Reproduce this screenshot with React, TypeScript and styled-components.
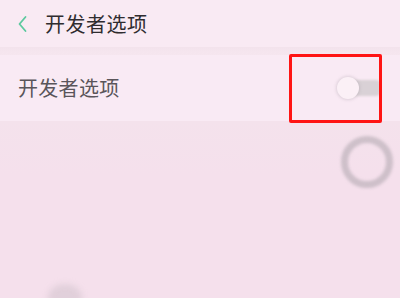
import React from "react";
import styled, { createGlobalStyle } from "styled-components";

const Global = createGlobalStyle`
  html, body { margin: 0; padding: 0; }
  body {
    width: 400px;
    height: 298px;
    overflow: hidden;
    background: #f5e1ed;
    font-family: "Noto Sans CJK SC", "Noto Sans", sans-serif;
  }
`;

const Screen = styled.div`
  position: relative;
  width: 400px;
  height: 298px;
  display: flex;
  flex-direction: column;
  background: #f5e1ec;
  overflow: hidden;
`;

const Header = styled.header`
  height: 47px;
  display: flex;
  align-items: center;
  padding-left: 17px;
  gap: 17px;
  background: #f9eaf3;
`;

const BackIcon = styled.svg`
  width: 11px;
  height: 18px;
  flex: none;
`;

const Title = styled.h1`
  margin: 0;
  font-size: 20px;
  font-weight: 400;
  color: #2f2c2f;
  letter-spacing: 0.5px;
  line-height: 1;
`;

const Divider = styled.div`
  height: 8px;
  background: linear-gradient(#f3e3ec, #f6e6ef);
`;

const Row = styled.div`
  height: 66px;
  display: flex;
  align-items: center;
  justify-content: space-between;
  padding: 0 20px 0 18px;
  background: #f9eaf4;
`;

const Label = styled.span`
  font-size: 20px;
  color: #5a555a;
  letter-spacing: 0.3px;
  line-height: 1;
`;

const Toggle = styled.div`
  position: relative;
  width: 43px;
  height: 24px;
  display: flex;
  align-items: center;
`;

const Track = styled.div`
  margin-left: 11px;
  width: 32px;
  height: 16px;
  border-radius: 0 4px 4px 0;
  background: #d9d1d6;
  filter: blur(0.8px);
`;

const Knob = styled.div`
  position: absolute;
  left: 0;
  top: 1px;
  width: 22px;
  height: 22px;
  border-radius: 50%;
  background: #fbf0f6;
  box-shadow: 0 0 3px 1px rgba(160, 150, 158, 0.3);
  filter: blur(0.6px);
`;

const Body = styled.div`
  flex: 1;
  background: linear-gradient(#f4e2ec, #f5e0ec 30%);
`;

const Highlight = styled.div`
  position: absolute;
  left: 289px;
  top: 54px;
  width: 87px;
  height: 63px;
  border: 3px solid #ff1414;
  border-radius: 2px;
`;

const TouchRing = styled.div`
  position: absolute;
  left: 341px;
  top: 136px;
  width: 52px;
  height: 52px;
  box-sizing: border-box;
  border-radius: 50%;
  border: 7px solid rgba(180, 170, 178, 0.6);
  filter: blur(1.5px);
`;

const TouchBlur = styled.div`
  position: absolute;
  left: 48px;
  top: 284px;
  width: 34px;
  height: 28px;
  border-radius: 50%;
  background: rgba(205, 192, 201, 0.5);
  filter: blur(3px);
`;

export default function App() {
  return (
    <>
      <Global />
      <Screen>
        <Header>
          <BackIcon viewBox="0 0 11 18">
            <path d="M8.5 2 L2.5 9 L8.5 16" fill="none" stroke="#5cc99e" strokeWidth="1.8" strokeLinecap="round" strokeLinejoin="round" />
          </BackIcon>
          <Title>开发者选项</Title>
        </Header>
        <Divider />
        <Row>
          <Label>开发者选项</Label>
          <Toggle>
            <Track />
            <Knob />
          </Toggle>
        </Row>
        <Body />
        <Highlight />
        <TouchRing />
        <TouchBlur />
      </Screen>
    </>
  );
}
